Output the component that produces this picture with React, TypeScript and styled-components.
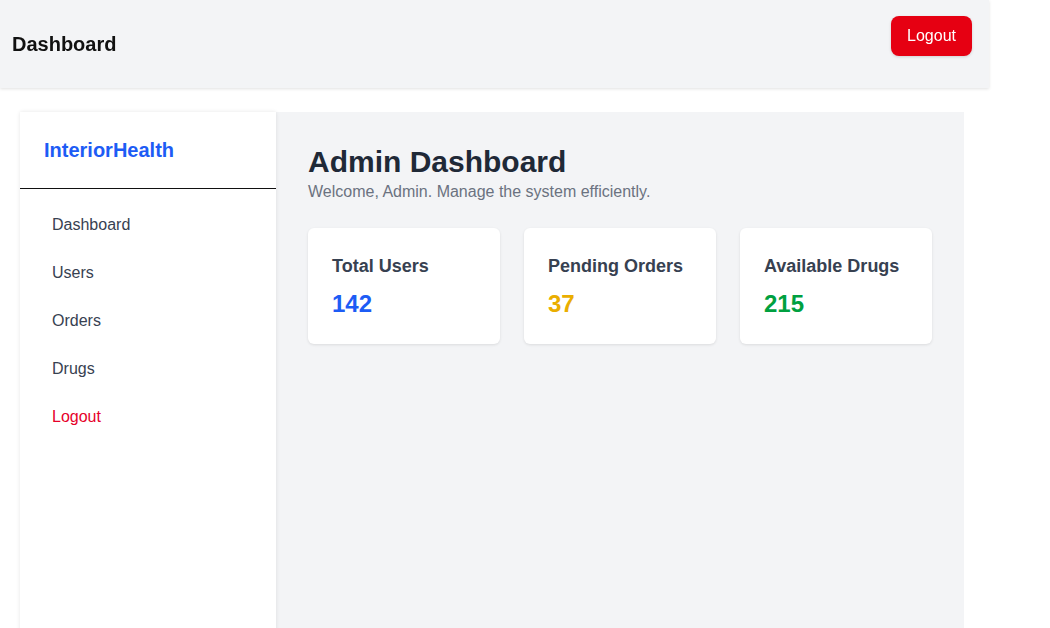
import React, { useLayoutEffect } from "react";
import styled, { createGlobalStyle } from "styled-components";

const GlobalStyle = createGlobalStyle`
  html, body {
    margin: 0;
    padding: 0;
    background: #ffffff;
    font-family: "Liberation Sans", Arial, sans-serif;
  }
  * { box-sizing: border-box; }
`;

const TopBar = styled.header`
  position: fixed;
  top: 0;
  left: 0;
  width: 989px;
  height: 88px;
  display: flex;
  align-items: center;
  justify-content: space-between;
  padding: 0 17px 0 12px;
  background: #f3f4f6;
  box-shadow: 0 1px 3px rgba(0, 0, 0, 0.12);
  z-index: 10;
`;

const TopTitle = styled.h1`
  margin: 0;
  font-size: 20px;
  line-height: 28px;
  font-weight: 700;
  color: #111111;
`;

const LogoutButton = styled.button`
  align-self: flex-start;
  margin-top: 16px;
  width: 81px;
  height: 40px;
  border: none;
  border-radius: 8px;
  background: #e60012;
  color: #ffffff;
  font-family: inherit;
  font-size: 16px;
  box-shadow: 0 1px 3px rgba(0, 0, 0, 0.15);
  cursor: pointer;
`;

const Layout = styled.div`
  display: flex;
  width: 964px;
  height: 865px;
  padding: 167px 0 0 20px;
`;

const Sidebar = styled.aside`
  width: 256px;
  flex-shrink: 0;
  background: #ffffff;
  box-shadow: 0 0 4px rgba(0, 0, 0, 0.1);
  position: relative;
  z-index: 1;
`;

const Brand = styled.div`
  padding: 24px;
  border-bottom: 1px solid #111111;
  font-size: 20px;
  line-height: 28px;
  font-weight: 700;
  color: #1d5cf5;
`;

const NavList = styled.nav`
  display: flex;
  flex-direction: column;
  padding: 12px 16px;
`;

const NavItem = styled.a<{ $danger?: boolean }>`
  display: block;
  padding: 12px 16px;
  font-size: 16px;
  line-height: 24px;
  color: ${(p) => (p.$danger ? "#e6002a" : "#374151")};
  text-decoration: none;
`;

const Main = styled.main`
  flex: 1;
  background: #f3f4f6;
  padding: 32px;
`;

const Title = styled.h2`
  margin: 0;
  font-size: 30px;
  line-height: 36px;
  font-weight: 700;
  color: #1f2937;
`;

const Subtitle = styled.p`
  margin: 0;
  font-size: 16px;
  line-height: 24px;
  color: #6b7280;
`;

const Cards = styled.div`
  display: grid;
  grid-template-columns: repeat(3, 1fr);
  gap: 24px;
  margin-top: 24px;
`;

const Card = styled.div`
  background: #ffffff;
  border-radius: 6px;
  padding: 24px;
  box-shadow: 0 1px 3px rgba(0, 0, 0, 0.1);
`;

const CardTitle = styled.h3`
  margin: 0;
  font-size: 18px;
  line-height: 28px;
  font-weight: 700;
  color: #374151;
`;

const CardValue = styled.div<{ $color: string }>`
  margin-top: 8px;
  font-size: 24px;
  line-height: 32px;
  font-weight: 700;
  color: ${(p) => p.$color};
`;

const stats = [
  { label: "Total Users", value: "142", color: "#1d5cf5" },
  { label: "Pending Orders", value: "37", color: "#eaae00" },
  { label: "Available Drugs", value: "215", color: "#00a040" },
];

const nav = ["Dashboard", "Users", "Orders", "Drugs"];

export default function App() {
  useLayoutEffect(() => {
    window.scrollTo(0, 55);
  }, []);

  return (
    <>
      <GlobalStyle />
      <TopBar>
        <TopTitle>Dashboard</TopTitle>
        <LogoutButton>Logout</LogoutButton>
      </TopBar>
      <Layout>
        <Sidebar>
          <Brand>InteriorHealth</Brand>
          <NavList>
            {nav.map((n) => (
              <NavItem key={n} href="#">
                {n}
              </NavItem>
            ))}
            <NavItem href="#" $danger>
              Logout
            </NavItem>
          </NavList>
        </Sidebar>
        <Main>
          <Title>Admin Dashboard</Title>
          <Subtitle>Welcome, Admin. Manage the system efficiently.</Subtitle>
          <Cards>
            {stats.map((s) => (
              <Card key={s.label}>
                <CardTitle>{s.label}</CardTitle>
                <CardValue $color={s.color}>{s.value}</CardValue>
              </Card>
            ))}
          </Cards>
        </Main>
      </Layout>
    </>
  );
}
